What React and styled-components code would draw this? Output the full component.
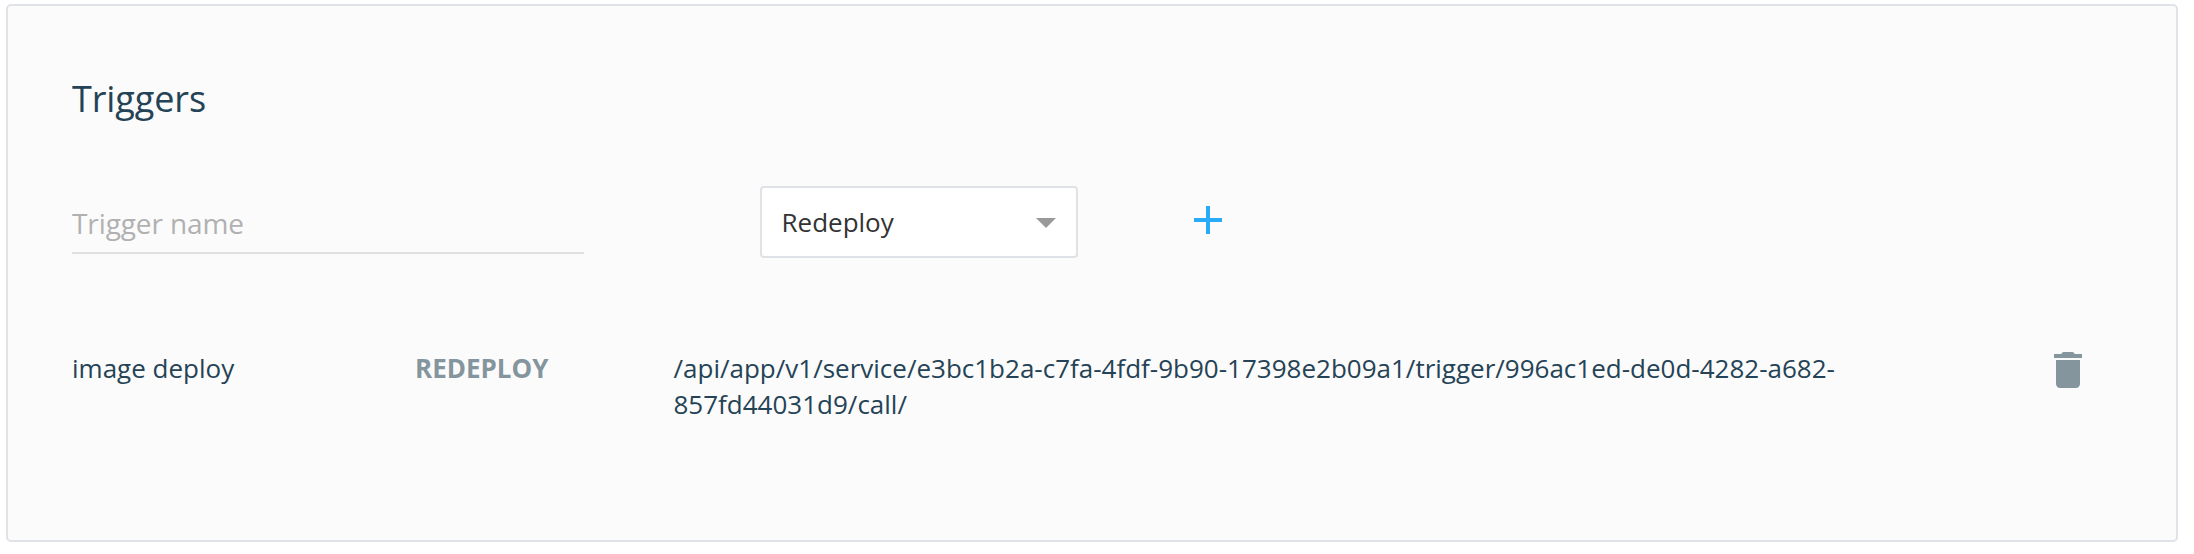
import React from "react";
import styled, { createGlobalStyle } from "styled-components";

const GlobalStyle = createGlobalStyle`
  *, *::before, *::after { box-sizing: border-box; }
  body {
    margin: 0;
    background: #fff;
    font-family: "Open Sans", sans-serif;
  }
`;

const Page = styled.main`
  padding: 4px 16px 12px 6px;
`;

const Card = styled.section`
  height: 538px;
  padding: 0 64px;
  background: #fbfbfb;
  border: 2px solid #dfe3e7;
  border-radius: 5px;
`;

const Title = styled.h2`
  margin: 0;
  padding-top: 68px;
  font-size: 36px;
  line-height: 50px;
  font-weight: 400;
  letter-spacing: -0.1px;
  color: #254356;
`;

const Form = styled.form`
  display: flex;
  align-items: flex-start;
  margin-top: 62px;
`;

const NameInput = styled.input`
  width: 512px;
  height: 68px;
  padding: 8px 0 0;
  border: 0;
  border-bottom: 2px solid #e0e0e0;
  border-radius: 0;
  outline: none;
  background: transparent;
  font: 400 28px "Open Sans", sans-serif;
  letter-spacing: -0.1px;
  color: #254356;

  &::placeholder {
    color: #b1b1b1;
    opacity: 1;
  }
`;

const Select = styled.button`
  display: flex;
  align-items: center;
  justify-content: space-between;
  width: 318px;
  height: 72px;
  margin-left: 176px;
  padding: 0 20px 0 19.5px;
  background: #fff;
  border: 2px solid #dfe3e7;
  border-radius: 4px;
  font: 400 26px/36px "Open Sans", sans-serif;
  color: #333;
`;

const Caret = styled.span`
  margin-top: 2px;
  border: 10px solid transparent;
  border-top-color: #999;
  border-bottom: 0;
`;

const IconButton = styled.button`
  display: flex;
  padding: 0;
  border: 0;
  background: none;
  color: ${(p) => p.$color};
`;

const AddButton = styled(IconButton)`
  margin: 10px 0 0 106px;
`;

const Row = styled.div`
  display: grid;
  grid-template-columns: 343px 258.5px 1180px 1fr;
  align-items: start;
  margin-top: 92px;
  font-size: 26px;
  line-height: 36px;
  color: #254356;
`;

const Action = styled.span`
  font-weight: 700;
  color: #84959e;
`;

const DeleteButton = styled(IconButton)`
  justify-self: end;
  margin: -4px 20px 0 0;
`;

const Icon = ({ d }) => (
  <svg width="48" height="48" viewBox="0 0 24 24" fill="currentColor" aria-hidden="true">
    <path d={d} />
  </svg>
);

export default function App() {
  return (
    <>
      <GlobalStyle />
      <Page>
        <Card>
          <Title>Triggers</Title>
          <Form onSubmit={(e) => e.preventDefault()}>
            <NameInput placeholder="Trigger name" />
            <Select type="button">
              Redeploy
              <Caret />
            </Select>
            <AddButton $color="#2aabf7" aria-label="Add trigger">
              <Icon d="M19 13h-6v6h-2v-6H5v-2h6V5h2v6h6v2z" />
            </AddButton>
          </Form>
          <Row>
            <span>image deploy</span>
            <Action>REDEPLOY</Action>
            <span>/api/app/v1/service/e3bc1b2a-c7fa-4fdf-9b90-17398e2b09a1/trigger/996ac1ed-de0d-4282-a682-857fd44031d9/call/</span>
            <DeleteButton $color="#84959e" aria-label="Delete trigger">
              <Icon d="M6 19c0 1.1.9 2 2 2h8c1.1 0 2-.9 2-2V7H6v12zM19 4h-3.5l-1-1h-5l-1 1H5v2h14V4z" />
            </DeleteButton>
          </Row>
        </Card>
      </Page>
    </>
  );
}
